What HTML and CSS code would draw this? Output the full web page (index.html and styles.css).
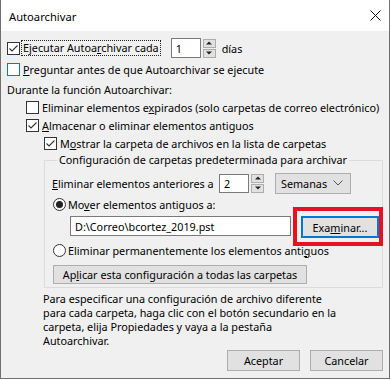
FILE: index.html
```html
<!DOCTYPE html>
<html lang="es">
<head>
<meta charset="utf-8">
<title>Autoarchivar</title>
<link rel="stylesheet" href="styles.css">
</head>
<body>
<div class="window">
  <div class="titlebar">
    <span class="title">Autoarchivar</span>
    <svg class="close" width="11" height="11" viewBox="0 0 11 11"><path d="M0.5 0.5 L10.5 10.5 M10.5 0.5 L0.5 10.5" stroke="#111" stroke-width="1" fill="none"/></svg>
  </div>
  <div class="content">
    <div class="row r1">
      <span class="cb checked"><svg width="11" height="11" viewBox="0 0 11 11"><path d="M1.5 5.5 L4 8 L9.5 2.5" stroke="#333" stroke-width="1.1" fill="none"/></svg></span>
      <span class="lbl focus">Ejecutar Autoa<u>r</u>chivar cada</span>
      <span class="num n1">1</span>
      <span class="spin"><span class="up"></span><span class="down"></span></span>
      <span class="dias">días</span>
    </div>
    <div class="row r2">
      <span class="cb hover"></span>
      <span class="lbl"><u>P</u>reguntar antes de que Autoarchivar se ejecute</span>
    </div>
    <div class="row r3">Durante la función Autoarchivar:</div>
    <div class="row r4 ind1">
      <span class="cb"></span>
      <span class="lbl">Eliminar elementos e<u>x</u>pirados (solo carpetas de correo electrónico)</span>
    </div>
    <div class="row r5 ind1">
      <span class="cb checked"><svg width="11" height="11" viewBox="0 0 11 11"><path d="M1.5 5.5 L4 8 L9.5 2.5" stroke="#333" stroke-width="1.1" fill="none"/></svg></span>
      <span class="lbl"><u>A</u>lmacenar o eliminar elementos antiguos</span>
    </div>
    <div class="row r6 ind2">
      <span class="cb checked"><svg width="11" height="11" viewBox="0 0 11 11"><path d="M1.5 5.5 L4 8 L9.5 2.5" stroke="#333" stroke-width="1.1" fill="none"/></svg></span>
      <span class="lbl">M<u>o</u>strar la carpeta de archivos en la lista de carpetas</span>
    </div>
    <fieldset class="group">
      <legend>Configuración de carpetas predeterminada para archivar</legend>
      <div class="grow g1">
        <span class="glbl"><u>E</u>liminar elementos anteriores a</span>
        <span class="num n2">2</span>
        <span class="spin s2"><span class="up"></span><span class="down"></span></span>
        <span class="select">Semanas<svg width="10" height="6" viewBox="0 0 10 6"><path d="M0.5 0.5 L5 5 L9.5 0.5" stroke="#555" stroke-width="1" fill="none"/></svg></span>
      </div>
      <div class="grow g2">
        <span class="radio on"></span>
        <span class="lbl">Mo<u>v</u>er elementos antiguos a:</span>
      </div>
      <div class="grow g3">
        <span class="path">D:\Correo\bcortez_2019.pst</span>
        <span class="btn browse">Exa<u>m</u>inar...</span>
      </div>
      <div class="grow g4">
        <span class="radio"></span>
        <span class="lbl">Eliminar permanentemente los elementos anti<u>g</u>uos</span>
      </div>
      <div class="grow g5">
        <span class="btn apply">Ap<u>l</u>icar esta configuración a todas las carpetas</span>
      </div>
    </fieldset>
    <p class="note">Para especificar una configuración de archivo diferente<br>para cada carpeta, haga clic con el botón secundario en la<br>carpeta, elija Propiedades y vaya a la pestaña<br>Autoarchivar.</p>
    <div class="actions">
      <span class="btn act">Aceptar</span>
      <span class="btn act">Cancelar</span>
    </div>
  </div>
  <div class="highlight"></div>
</div>
</body>
</html>
```
FILE: styles.css
```css
* { box-sizing: border-box; }
html, body { margin: 0; padding: 0; background: #ffffff; }
body {
  font-family: "Noto Sans", "Open Sans", sans-serif;
  font-size: 10.8px;
  color: #000;
}
u { text-decoration: underline; text-underline-offset: 1px; text-decoration-thickness: 1px; }
.window {
  position: relative;
  width: 390px;
  height: 379px;
  border: 1px solid #707070;
  border-top: none;
  background: #f0f0f0;
}
.titlebar {
  height: 31px;
  background: #fff;
  display: flex;
  align-items: center;
  justify-content: space-between;
  padding: 0 8px 0 8px;
}
.title { font-size: 11.2px; margin-top: 1px; }
.content { padding: 7px 6px 0 6px; }
.row { display: flex; align-items: center; white-space: nowrap; }
.r1 { height: 20px; }
.r2 { height: 21px; margin-top: 1px; }
.r3 { height: 19px; }
.r4 { height: 17px; }
.r5 { height: 19px; }
.r6 { height: 17px; }
.ind1 { padding-left: 19px; }
.ind2 { padding-left: 37px; }
.cb {
  width: 13px; height: 13px;
  border: 1px solid #333;
  background: #fff;
  flex: none;
  display: flex; align-items: center; justify-content: center;
}
.cb.hover { border-color: #0078d7; }
.lbl { margin-left: 3px; }
.r1 .lbl { margin-left: 2px; }
.focus { outline: 1px dotted #222; outline-offset: 0; padding: 0 1px; line-height: 14px; }
.num {
  background: #fff;
  border: 1px solid #7a7a7a;
  display: flex; align-items: center;
  padding-left: 4px;
  flex: none;
}
.n1 { width: 30px; height: 20px; margin-left: 11px; }
.spin {
  display: flex; flex-direction: column; gap: 1px;
  width: 13px; height: 19px; margin-left: 2px; flex: none;
}
.spin .up, .spin .down {
  flex: 1;
  background: #e1e1e1;
  border: 1px solid #adadad;
  position: relative;
}
.spin .up::after, .spin .down::after {
  content: ""; position: absolute; left: 50%; top: 50%;
  width: 0; height: 0;
  border-left: 3px solid transparent; border-right: 3px solid transparent;
  transform: translate(-50%, -50%);
}
.spin .up::after { border-bottom: 3px solid #222; }
.spin .down::after { border-top: 3px solid #222; }
.dias { margin-left: 6px; }
.group {
  margin: 0 0 0 37px;
  padding: 0 0 3px 7px;
  border: 1px solid #dcdcdc;
  min-width: 0;
}
.group legend {
  padding: 0 2px;
  margin-left: 5px;
  line-height: 16px;
  white-space: nowrap;
}
.grow { display: flex; align-items: center; white-space: nowrap; }
.g1 { height: 22px; margin-top: 4px; }
.glbl { width: 167px; flex: none; }
.n2 { width: 30px; height: 19px; }
.s2 { height: 19px; margin-left: 2px; }
.select {
  width: 76px; height: 21px; margin-left: 11px;
  background: #e1e1e1; border: 1px solid #adadad;
  display: flex; align-items: center; justify-content: space-between;
  padding: 0 7px 0 5px;
}
.g2 { height: 20px; padding-left: 1px; }
.radio {
  width: 13px; height: 13px; border-radius: 50%;
  border: 1px solid #333; background: #fff; flex: none;
  display: flex; align-items: center; justify-content: center;
}
.radio.on::after { content: ""; width: 7px; height: 7px; border-radius: 50%; background: #222; }
.g2 .lbl, .g4 .lbl { margin-left: 2px; }
.g3 { height: 26px; padding-left: 18px; align-items: flex-start; padding-top: 2px; }
.path {
  width: 221px; height: 20px;
  background: #fff; border: 1px solid #7a7a7a;
  display: flex; align-items: center; padding-left: 4px;
  flex: none;
}
.btn {
  background: #e1e1e1; border: 1px solid #adadad;
  display: flex; align-items: center; justify-content: center;
  flex: none;
}
.browse {
  width: 78px; height: 22px; margin-left: 10px;
  border: 2px solid #0078d7;
}
.g4 { height: 20px; padding-left: 1px; }
.g5 { padding-left: 1px; padding-top: 5px; }
.apply { width: 254px; height: 19px; }
.note {
  margin: 4px 0 0 36px;
  line-height: 14px;
  white-space: nowrap;
}
.actions {
  display: flex; justify-content: flex-end; gap: 10px;
  margin-top: 2px;
}
.act { width: 73px; height: 21px; }
.highlight {
  position: absolute;
  left: 292px; top: 207px;
  width: 90px; height: 39px;
  border: 4px solid #e81123;
}
```
